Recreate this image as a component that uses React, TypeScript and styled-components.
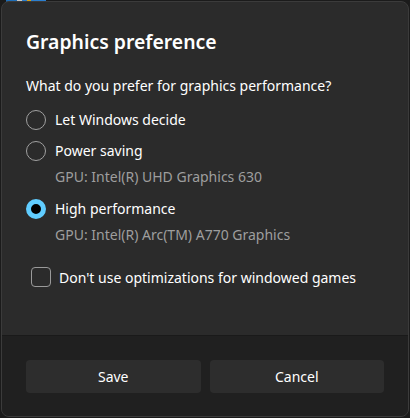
import React from "react";
import styled, { createGlobalStyle } from "styled-components";

const Global = createGlobalStyle`
  html, body { margin: 0; padding: 0; background: #1b1b1b; }
  body { font-family: "Noto Sans", "Open Sans", sans-serif; -webkit-font-smoothing: antialiased; }
  * { box-sizing: border-box; }
`;

const Screen = styled.div`
  position: relative;
  width: 410px;
  height: 418px;
  padding: 1px 1px 0 1px;
  overflow: hidden;
`;

const TaskIcon = styled.div`
  position: absolute;
  left: 6px;
  top: 0;
  width: 40px;
  height: 3px;
  background: linear-gradient(90deg, #1f6fb8 0 28%, #c9c9c9 28% 40%, #2b7fd0 40% 52%, #d7a21b 52% 62%, #2b7fd0 62% 100%);
`;

const Dialog = styled.div`
  position: relative;
  width: 408px;
  height: 416px;
  display: flex;
  flex-direction: column;
  background: #2b2b2b;
  border: 1px solid #3b3b3b;
  border-radius: 8px;
  overflow: hidden;
  color: #ffffff;
`;

const Content = styled.div`
  flex: 1;
  padding: 26px 24px 0 24px;
  display: flex;
  flex-direction: column;
`;

const Title = styled.h1`
  margin: 0;
  font-size: 19.4px;
  font-weight: 600;
  line-height: 28px;
  color: #ffffff;
`;

const Prompt = styled.p`
  margin: 20px 0 0 0;
  font-size: 14px;
  line-height: 20px;
  color: #ffffff;
`;

const Options = styled.div`
  margin-top: 8px;
  display: flex;
  flex-direction: column;
`;

const Option = styled.div`
  display: flex;
  flex-direction: column;
`;

const OptionRow = styled.label`
  display: flex;
  align-items: center;
  height: 31px;
  gap: 9px;
  font-size: 14px;
  color: #ffffff;
`;

const Radio = styled.span<{ $checked?: boolean }>`
  width: 20px;
  height: 20px;
  border-radius: 50%;
  flex: none;
  ${(p) =>
    p.$checked
      ? `background: #000; border: 5px solid #60cdff;`
      : `background: transparent; border: 1px solid #a0a0a0;`}
`;

const Sub = styled.div`
  padding-left: 29px;
  font-size: 14px;
  line-height: 20px;
  color: #9e9e9e;
  margin-top: 1px;
  margin-bottom: 6px;
`;

const CheckRow = styled.label`
  display: flex;
  align-items: center;
  gap: 8px;
  margin-top: 16px;
  padding-left: 5px;
  font-size: 14px;
  color: #ffffff;
`;

const Box = styled.span`
  width: 20px;
  height: 20px;
  border-radius: 4px;
  border: 1px solid #9a9a9a;
  flex: none;
`;

const Footer = styled.div`
  flex: none;
  background: #202020;
  border-top: 1px solid #1a1a1a;
  padding: 24px 24px 23px 24px;
  display: grid;
  grid-template-columns: 1fr 1fr;
  gap: 9px;
`;

const Button = styled.button`
  height: 33px;
  border: none;
  border-radius: 4px;
  background: #2d2d2d;
  color: #ffffff;
  font-family: inherit;
  font-size: 14px;
`;

export default function App() {
  return (
    <>
      <Global />
      <Screen>
        <TaskIcon />
        <Dialog>
          <Content>
            <Title>Graphics preference</Title>
            <Prompt>What do you prefer for graphics performance?</Prompt>
            <Options>
              <Option>
                <OptionRow>
                  <Radio />
                  Let Windows decide
                </OptionRow>
              </Option>
              <Option>
                <OptionRow>
                  <Radio />
                  Power saving
                </OptionRow>
                <Sub>GPU: Intel(R) UHD Graphics 630</Sub>
              </Option>
              <Option>
                <OptionRow>
                  <Radio $checked />
                  High performance
                </OptionRow>
                <Sub>GPU: Intel(R) Arc(TM) A770 Graphics</Sub>
              </Option>
            </Options>
            <CheckRow>
              <Box />
              Don't use optimizations for windowed games
            </CheckRow>
          </Content>
          <Footer>
            <Button>Save</Button>
            <Button>Cancel</Button>
          </Footer>
        </Dialog>
      </Screen>
    </>
  );
}
